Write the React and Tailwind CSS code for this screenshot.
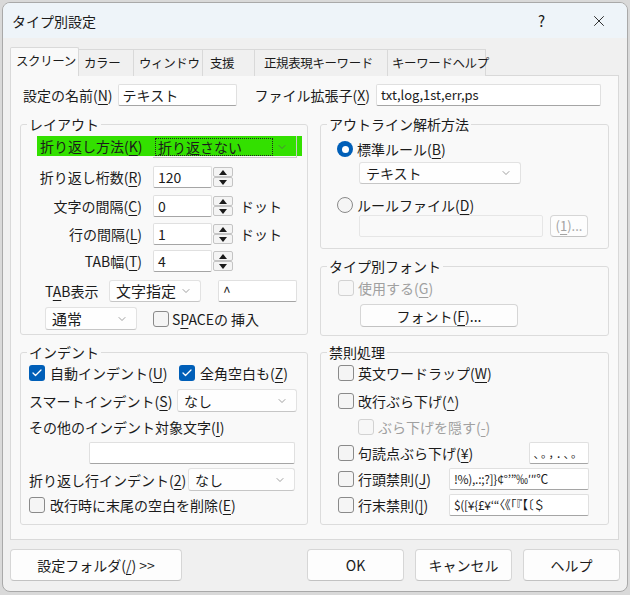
import { Check, ChevronDown, X } from 'lucide-react';

function U({ children }) {
  return <span className="underline decoration-1 underline-offset-[3px]">{children}</span>;
}

function CheckBox({ checked = false, disabled = false }) {
  if (checked) {
    return (
      <span className="flex h-4 w-4 shrink-0 items-center justify-center rounded-[3px] bg-[#005fb8]">
        <Check className="h-3 w-3 text-white" strokeWidth={2.5} />
      </span>
    );
  }
  return (
    <span
      className={`block h-4 w-4 shrink-0 rounded-[3px] border ${
        disabled ? 'border-[#d2d2d2] bg-[#f7f7f7]' : 'border-[#8a8a8a] bg-[#f5f5f5]'
      }`}
    />
  );
}

function Radio({ checked = false }) {
  if (checked) {
    return (
      <span className="flex h-4 w-4 shrink-0 items-center justify-center rounded-full bg-[#005fb8]">
        <span className="block h-[7px] w-[7px] rounded-full bg-white" />
      </span>
    );
  }
  return <span className="block h-4 w-4 shrink-0 rounded-full border border-[#8a8a8a] bg-[#f5f5f5]" />;
}

function Combo({ value, className = '' }) {
  return (
    <div
      className={`flex items-center justify-between rounded-[3px] border border-[#e2e2e2] border-b-[#c6c6c6] bg-[#fefefe] pl-[6px] pr-[8px] ${className}`}
    >
      <span className="whitespace-nowrap">{value}</span>
      <ChevronDown className="h-3 w-3 text-[#777]" strokeWidth={1.4} />
    </div>
  );
}

function Edit({ value = '', className = '', disabled = false }) {
  return (
    <div
      className={`flex items-center overflow-hidden whitespace-nowrap rounded-[2px] border px-[4px] ${
        disabled
          ? 'border-[#e6e6e6] bg-[#f9f9f9]'
          : 'border-[#e0e0e0] border-b-[#a5a5a5] bg-white'
      } ${className}`}
    >
      {value}
    </div>
  );
}

function Arrow({ up }) {
  return (
    <span className="flex h-[10px] w-[20px] items-center justify-center rounded-[2px] border border-[#c4c4c4] bg-[#f4f4f4]">
      <svg width="8" height="5" viewBox="0 0 8 5">
        <polygon points={up ? '0,5 8,5 4,0' : '0,0 8,0 4,5'} fill="#1a1a1a" />
      </svg>
    </span>
  );
}

function SpinRow({ label, value, unit, className = '' }) {
  return (
    <div className={`flex h-[22px] items-center ${className}`}>
      <span className="w-[121px] text-right whitespace-nowrap">{label}</span>
      <Edit value={value} className="ml-[11px] h-[22px] w-[59px]" />
      <span className="ml-px flex flex-col">
        <Arrow up />
        <Arrow />
      </span>
      {unit && <span className="ml-[7px]">{unit}</span>}
    </div>
  );
}

function Group({ title, className = '', children }) {
  return (
    <fieldset className={`rounded-[3px] border border-[#dcdcdc] ${className}`}>
      <legend className="ml-[6px] px-[2px] text-[14px] leading-[16px]">{title}</legend>
      {children}
    </fieldset>
  );
}

function Btn({ children, className = '', disabled = false }) {
  return (
    <div
      className={`flex items-center justify-center rounded-[4px] border border-[#d6d6d6] border-b-[#c2c2c2] bg-[#fdfdfd] ${
        disabled ? 'text-[#a3a3a3]' : ''
      } ${className}`}
    >
      {children}
    </div>
  );
}

const tabs = [
  { name: 'カラー', w: 'w-[56px] pl-[5px]' },
  { name: 'ウィンドウ', w: 'w-[70px] pl-[5px]' },
  { name: '支援', w: 'w-[53px] pl-[7px]' },
  { name: '正規表現キーワード', w: 'w-[134px] pl-[9px]' },
  { name: 'キーワードヘルプ', w: 'w-[99px] pl-[4px]' },
];

export default function App() {
  return (
    <div className="h-[595px] w-[630px] overflow-hidden bg-[#d9d9d9] pt-[2px] pl-[2px] font-['Noto_Sans_CJK_JP','Noto_Sans',sans-serif] text-[14px] leading-[18px] text-[#1b1b1b]">
      <div className="h-[590px] w-[626px] overflow-hidden rounded-[8px] border border-[#a9a9a9] bg-[#f0f0f0]">
        {/* title bar */}
        <div className="flex h-[35px] items-center bg-[#eef4f9] pl-[9px]">
          <span className="text-[14px]">タイプ別設定</span>
          <span className="ml-auto text-[15px]">?</span>
          <X className="ml-[45px] mr-[19px] h-[18px] w-[18px]" strokeWidth={1.2} />
        </div>

        {/* tabs */}
        <div className="ml-[7px] mt-[9px] flex h-[29px] items-end whitespace-nowrap text-[12.5px] tracking-[-0.4px]">
          <div className="relative z-10 flex h-[29px] w-[69px] items-center rounded-t-[2px] border border-b-0 border-[#d9d9d9] bg-[#f9f9f9] pl-[5px] pb-[2px]">
            スクリーン
          </div>
          {tabs.map((t) => (
            <div
              key={t.name}
              className={`-ml-px flex h-[27px] items-center border border-b-0 border-[#d9d9d9] bg-[#f0f0f0] ${t.w}`}
            >
              {t.name}
            </div>
          ))}
        </div>

        {/* panel */}
        <div className="-mt-px ml-[7px] h-[465px] w-[609px] border border-[#d9d9d9] bg-[#f9f9f9] pt-[8px]">
          <div className="flex h-[22px] items-center">
            <span className="ml-[12px]">設定の名前(<U>N</U>)</span>
            <Edit value="テキスト" className="ml-[5px] h-[22px] w-[119px]" />
            <span className="ml-[18px]">ファイル拡張子(<U>X</U>)</span>
            <Edit value="txt,log,1st,err,ps" className="ml-[6px] h-[22px] w-[225px] text-[13px]" />
          </div>

          <div className="mt-[10px] flex">
            {/* left column */}
            <div className="ml-[9px] w-[288px]">
              <Group title="レイアウト" className="h-[219px]">
                <div className="ml-[16px] mt-[4px] flex h-[20px] w-[265px] items-start bg-[#33e000]">
                  <span className="w-[116px] pl-[3px] leading-[20px]">折り返し方法(<U>K</U>)</span>
                  <div className="flex h-[22px] w-[144px] items-center justify-between border-b border-r border-[#c9c9c9] pl-[2px] pr-[8px]">
                    <span className="flex h-[18px] w-[118px] items-center border border-dotted border-[#222] pl-[2px]">
                      折り返さない
                    </span>
                    <ChevronDown className="h-3 w-3 text-[#5a5a5a]" strokeWidth={1.4} />
                  </div>
                </div>
                <SpinRow label={<>折り返し桁数(<U>R</U>)</>} value="120" className="mt-[10px]" />
                <SpinRow label={<>文字の間隔(<U>C</U>)</>} value="0" unit="ドット" className="mt-[7px]" />
                <SpinRow label={<>行の間隔(<U>L</U>)</>} value="1" unit="ドット" className="mt-[6px]" />
                <SpinRow label={<>TAB幅(<U>T</U>)</>} value="4" className="mt-[5px]" />
                <div className="mt-[8px] flex h-[22px] items-center">
                  <span className="ml-[24px] w-[64px]">T<U>A</U>B表示</span>
                  <Combo value="文字指定" className="h-[22px] w-[92px] text-[15px]" />
                  <Edit value="^" className="ml-[17px] h-[22px] w-[79px]" />
                </div>
                <div className="mt-[5px] flex h-[23px] items-center">
                  <Combo value="通常" className="ml-[24px] h-[23px] w-[92px] text-[15px]" />
                  <span className="ml-[16px]">
                    <CheckBox />
                  </span>
                  <span className="ml-[3px]">S<U>P</U>ACEの 挿入</span>
                </div>
              </Group>

              <Group title="インデント" className="mt-[9px] h-[181px]">
                <div className="mt-[4px] flex h-[18px] items-center">
                  <span className="ml-[8px]">
                    <CheckBox checked />
                  </span>
                  <span className="ml-[5px] w-[129px]">自動インデント(<U>U</U>)</span>
                  <CheckBox checked />
                  <span className="ml-[5px]">全角空白も(<U>Z</U>)</span>
                </div>
                <div className="mt-[7px] flex h-[23px] items-center">
                  <span className="ml-[8px] w-[148px]">スマートインデント(<U>S</U>)</span>
                  <Combo value="なし" className="h-[23px] w-[120px]" />
                </div>
                <div className="ml-[8px] mt-[6px] h-[18px]">その他のインデント対象文字(<U>I</U>)</div>
                <Edit className="ml-[68px] mt-[6px] h-[22px] w-[206px]" />
                <div className="mt-[4px] flex h-[23px] items-center">
                  <span className="ml-[8px] w-[159px]">折り返し行インデント(<U>2</U>)</span>
                  <Combo value="なし" className="h-[23px] w-[107px]" />
                </div>
                <div className="mt-[5px] flex h-[18px] items-center">
                  <span className="ml-[8px]">
                    <CheckBox />
                  </span>
                  <span className="ml-[5px]">改行時に末尾の空白を削除(<U>E</U>)</span>
                </div>
              </Group>
            </div>

            {/* right column */}
            <div className="ml-[12px] w-[289px]">
              <Group title="アウトライン解析方法" className="h-[133px]">
                <div className="mt-[8px] flex h-[18px] items-center">
                  <span className="ml-[16px]">
                    <Radio checked />
                  </span>
                  <span className="ml-[4px]">標準ルール(<U>B</U>)</span>
                </div>
                <Combo value="テキスト" className="ml-[38px] mt-[4px] h-[22px] w-[162px]" />
                <div className="mt-[12px] flex h-[18px] items-center">
                  <span className="ml-[16px]">
                    <Radio />
                  </span>
                  <span className="ml-[4px]">ルールファイル(<U>D</U>)</span>
                </div>
                <div className="mt-[1px] flex h-[22px] items-center">
                  <Edit disabled className="ml-[38px] h-[22px] w-[184px]" />
                  <Btn disabled className="ml-[7px] h-[22px] w-[38px] text-[13px]">
                    (<U>1</U>)...
                  </Btn>
                </div>
              </Group>

              <Group title="タイプ別フォント" className="mt-[9px] h-[78px]">
                <div className="mt-[5px] flex h-[18px] items-center text-[#a0a0a0]">
                  <span className="ml-[17px]">
                    <CheckBox disabled />
                  </span>
                  <span className="ml-[4px]">使用する(<U>G</U>)</span>
                </div>
                <Btn className="ml-[39px] mt-[7px] h-[23px] w-[158px]">
                  フォント(<U>F</U>)...
                </Btn>
              </Group>

              <Group title="禁則処理" className="mt-[8px] h-[181px]">
                <div className="mt-[4px] flex h-[18px] items-center">
                  <span className="ml-[17px]">
                    <CheckBox />
                  </span>
                  <span className="ml-[4px]">英文ワードラップ(<U>W</U>)</span>
                </div>
                <div className="mt-[10px] flex h-[18px] items-center">
                  <span className="ml-[17px]">
                    <CheckBox />
                  </span>
                  <span className="ml-[4px]">改行ぶら下げ(<U>^</U>)</span>
                </div>
                <div className="mt-[8px] flex h-[18px] items-center text-[#a0a0a0]">
                  <span className="ml-[37px]">
                    <CheckBox disabled />
                  </span>
                  <span className="ml-[4px]">ぶら下げを隠す(<U>-</U>)</span>
                </div>
                <div className="mt-[6px] flex h-[22px] items-center">
                  <span className="ml-[17px]">
                    <CheckBox />
                  </span>
                  <span className="ml-[4px] w-[171px]">句読点ぶら下げ(<U>¥</U>)</span>
                  <Edit value="、。，．、。" className="h-[22px] w-[60px] justify-end text-[11px] tracking-[2px]" />
                </div>
                <div className="mt-[4px] flex h-[22px] items-center">
                  <span className="ml-[17px]">
                    <CheckBox />
                  </span>
                  <span className="ml-[4px] w-[91px]">行頭禁則(<U>J</U>)</span>
                  <Edit
                    value="!%),.:;?]}¢°’”‰′″℃"
                    className="h-[22px] w-[140px] text-[12px] tracking-[-0.3px]"
                  />
                </div>
                <div className="mt-[4px] flex h-[22px] items-center">
                  <span className="ml-[17px]">
                    <CheckBox />
                  </span>
                  <span className="ml-[4px] w-[91px]">行末禁則(<U>]</U>)</span>
                  <Edit
                    value="$([¥{£¥‘“〈《「『【〔＄"
                    className="h-[22px] w-[140px] text-[12px] tracking-[-0.3px]"
                  />
                </div>
              </Group>
            </div>
          </div>
        </div>

        {/* bottom buttons */}
        <div className="mt-[9px] flex h-[32px] items-center">
          <Btn className="ml-[7px] h-[32px] w-[172px]">
            設定フォルダ(<U>/</U>) &gt;&gt;
          </Btn>
          <div className="ml-auto mr-[7px] flex gap-[11px]">
            <Btn className="h-[32px] w-[97px] border-[#3b7cc0] border-b-[#3b7cc0]">OK</Btn>
            <Btn className="h-[32px] w-[97px]">キャンセル</Btn>
            <Btn className="h-[32px] w-[97px]">ヘルプ</Btn>
          </div>
        </div>
      </div>
    </div>
  );
}
